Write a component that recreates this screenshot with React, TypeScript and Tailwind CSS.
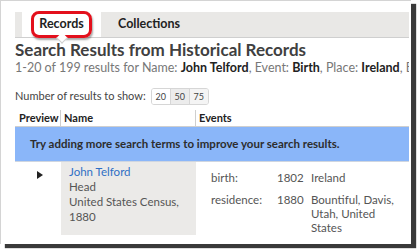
export default function App() {
  return (
    <div className="w-[420px] h-[250px] bg-white" style={{ fontFamily: "Lato, 'Open Sans', sans-serif" }}>
      <div className="w-[411px] h-[244px] bg-white border-l border-t border-[#d4d4d4] shadow-[5px_4px_1px_#3a3a3a] overflow-hidden pl-[14px] pr-[2px] text-[#333]">
        {/* tabs */}
        <div className="mt-[11px] h-[26px] bg-[#e9e8e6] border-b border-[#cfcfcf] flex items-stretch relative">
          <div className="ml-[7px] w-[79px] bg-white flex items-center justify-center relative">
            <span className="text-[12.5px] font-bold text-[#222] px-[5px] py-[1px] rounded-[8px] border-[3px] border-[#e3101c] shadow-[1px_2px_2px_rgba(0,0,0,0.35)]">
              Records
            </span>
            <div className="absolute left-[36px] -bottom-[5px] w-[8px] h-[8px] bg-white border-r border-b border-[#cfcfcf] rotate-45" />
          </div>
          <div className="ml-[17px] flex items-center text-[12.5px] font-bold text-[#222]">Collections</div>
        </div>

        {/* heading */}
        <div className="mt-[2px] text-[17px] leading-[20px] font-bold text-[#404040] whitespace-nowrap">
          Search Results from Historical Records
        </div>
        <div className="text-[12.5px] leading-[15px] text-[#777] whitespace-nowrap overflow-hidden">
          1-20 of 199 results for Name: <b className="text-[#222]">John Telford</b>, Event: <b className="text-[#222]">Birth</b>, Place: <b className="text-[#222]">Ireland</b>, Event
        </div>

        {/* page size */}
        <div className="mt-[13px] flex items-center text-[11px] text-[#444]">
          <span>Number of results to show:</span>
          <div className="ml-[5px] flex border border-[#d6d6d6] rounded-[3px] overflow-hidden text-[9px] text-[#444] h-[17px]">
            <span className="w-[19px] flex items-center justify-center bg-white border-r border-[#d6d6d6]">20</span>
            <span className="w-[19px] flex items-center justify-center bg-[#ececec] border-r border-[#d6d6d6]">50</span>
            <span className="w-[18px] flex items-center justify-center bg-[#f4f4f4]">75</span>
          </div>
        </div>

        {/* table header */}
        <div className="mt-[5px] flex h-[17px] border-b border-[#cfcfcf] text-[11px] font-bold text-[#222]">
          <div className="w-[46px] pl-[4px] border-r border-[#cfcfcf] flex items-center">Preview</div>
          <div className="w-[135px] pl-[3px] border-r border-[#cfcfcf] flex items-center">Name</div>
          <div className="pl-[3px] flex items-center">Events</div>
        </div>

        {/* banner */}
        <div className="h-[35px] bg-[#8ab6f9] flex items-center pl-[15px] text-[11.5px] font-bold text-[#2d2d2d] border-b border-[#cfd6e0]">
          Try adding more search terms to improve your search results.
        </div>

        {/* row */}
        <div className="flex text-[11.5px] leading-[15px] text-[#555]">
          <div className="w-[46px] flex justify-center pt-[9px] pl-[4px]">
            <svg width="6" height="8" viewBox="0 0 6 8"><path d="M0 0 L6 4 L0 8 Z" fill="#222" /></svg>
          </div>
          <div className="w-[135px] h-[73px] bg-[#ebeae8] pl-[8px] pt-[2px]">
            <div className="text-[#2f6fc4]">John Telford</div>
            <div>Head</div>
            <div>United States Census,</div>
            <div>1880</div>
          </div>
          <div className="pl-[15px] pt-[8px]">
            <div className="flex">
              <span className="w-[66px]">birth:</span>
              <span className="w-[34px]">1802</span>
              <span>Ireland</span>
            </div>
            <div className="flex mt-[8px] leading-[14px]">
              <span className="w-[66px]">residence:</span>
              <span className="w-[34px]">1880</span>
              <span className="w-[90px]">Bountiful, Davis, Utah, United States</span>
            </div>
          </div>
        </div>
      </div>
    </div>
  );
}
